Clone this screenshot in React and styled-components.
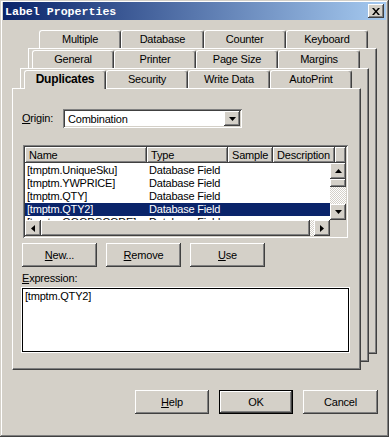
import React from "react";
import styled, { createGlobalStyle, css } from "styled-components";

const GlobalStyle = createGlobalStyle`
  html, body {
    margin: 0;
    padding: 0;
    background: #d4d0c8;
  }
  body {
    font-family: "Liberation Sans", Arial, sans-serif;
    font-size: 11px;
    color: #000;
  }
  * { box-sizing: border-box; }
`;

const raised = css`
  background: #d4d0c8;
  box-shadow: inset -1px -1px #404040, inset 1px 1px #fff,
    inset -2px -2px #808080, inset 2px 2px #d4d0c8;
`;

const sunken = css`
  box-shadow: inset 1px 1px #808080, inset -1px -1px #fff,
    inset 2px 2px #404040, inset -2px -2px #d4d0c8;
`;

const Window = styled.div`
  width: 389px;
  height: 437px;
  padding: 2px 3px 3px 3px;
  background: #d4d0c8;
  box-shadow: inset -1px -1px #404040, inset 1px 1px #d4d0c8,
    inset -2px -2px #808080, inset 2px 2px #fff;
  display: flex;
  flex-direction: column;
  letter-spacing: -0.2px;
`;

const TitleBar = styled.div`
  height: 18px;
  display: flex;
  align-items: center;
  justify-content: space-between;
  padding: 0 2px 0 2px;
  background: linear-gradient(to right, #0a246a, #a6caf0);
`;

const Title = styled.span`
  font-family: "Liberation Mono", "Courier New", monospace;
  font-weight: 700;
  font-size: 11.6px;
  letter-spacing: 0;
  color: #fff;
`;

const CloseButton = styled.div`
  ${raised};
  width: 16px;
  height: 14px;
  display: flex;
  align-items: center;
  justify-content: center;
`;

const Stack = styled.div`
  width: 349px;
  display: flex;
  flex-direction: column;
  ${({ $root }) =>
    $root
      ? css`margin: 10px 0 0 25px;`
      : css`margin: 1px 0 -9px -9px;`}
`;

const TabRow = styled.div`
  display: flex;
  height: 18px;
  padding: 0 9px 0 ${({ $indent }) => $indent}px;
`;

const Tab = styled.div`
  flex: 1;
  height: 18px;
  background: #d4d0c8;
  border-top: 1px solid #fff;
  border-left: 1px solid #fff;
  border-right: 1px solid #404040;
  border-radius: 3px 3px 0 0;
  box-shadow: inset -1px 0 #808080;
  display: flex;
  align-items: center;
  justify-content: center;
  padding-bottom: 1px;
  ${({ $active }) =>
    $active &&
    css`
      position: relative;
      height: 19px;
      margin-bottom: -1px;
      padding-bottom: 2px;
      font-weight: 700;
      font-size: 12px;
    `}
`;

const Page = styled.div`
  background: #d4d0c8;
  border-top: 1px solid #fff;
  border-left: 1px solid #fff;
  border-right: 1px solid #404040;
  border-bottom: 1px solid #404040;
  box-shadow: inset -1px -1px #808080;
  ${({ $front }) =>
    $front &&
    css`
      height: 282px;
      padding: 20px 11px 0 9px;
      display: flex;
      flex-direction: column;
    `}
`;

const FieldRow = styled.div`
  display: flex;
  align-items: center;
`;

const Label = styled.span`
  width: 41px;
  line-height: 13px;
`;

const U = styled.span`
  text-decoration: underline;
`;

const Combo = styled.div`
  ${sunken};
  background: #fff;
  width: 179px;
  height: 19px;
  padding: 2px;
  display: flex;
  align-items: center;
`;

const ComboText = styled.span`
  flex: 1;
  padding-left: 3px;
`;

const SmallButton = styled.div`
  ${raised};
  width: ${({ $w }) => $w || 16}px;
  height: ${({ $h }) => $h || 16}px;
  flex: none;
  display: flex;
  align-items: center;
  justify-content: center;
`;

const ListView = styled.div`
  ${sunken};
  background: #fff;
  width: 325px;
  height: 93px;
  margin: 17px 0 0 1px;
  padding: 2px;
  display: flex;
  flex-direction: column;
`;

const HeaderRow = styled.div`
  display: flex;
  height: 16px;
  flex: none;
`;

const HeaderCell = styled.div`
  ${raised};
  width: ${({ $w }) => $w}px;
  flex: ${({ $w }) => ($w ? "none" : 1)};
  padding-left: 4px;
  line-height: 16px;
  white-space: nowrap;
  overflow: hidden;
`;

const ListMiddle = styled.div`
  flex: 1;
  display: flex;
  min-height: 0;
`;

const Rows = styled.div`
  flex: 1;
  overflow: hidden;
  padding-top: 1px;
`;

const Row = styled.div`
  display: flex;
  height: 13px;
  line-height: 13px;
  white-space: nowrap;
  ${({ $selected }) =>
    $selected &&
    css`
      background: #0a246a;
      color: #fff;
    `}
`;

const Cell = styled.span`
  width: ${({ $w }) => $w}px;
  padding-left: 2px;
  flex: none;
`;

const checker = css`
  background-color: #fff;
  background-image: conic-gradient(
    #d4d0c8 25%,
    #fff 0 50%,
    #d4d0c8 0 75%,
    #fff 0
  );
  background-size: 2px 2px;
`;

const VScroll = styled.div`
  width: 16px;
  display: flex;
  flex-direction: column;
`;

const Track = styled.div`
  flex: 1;
  ${checker};
`;

const HScrollRow = styled.div`
  display: flex;
  height: 16px;
  flex: none;
`;

const HScroll = styled.div`
  flex: 1;
  display: flex;
`;

const Corner = styled.div`
  width: 16px;
  background: #d4d0c8;
`;

const ButtonRow = styled.div`
  display: flex;
  gap: ${({ $gap }) => $gap}px;
  margin-top: ${({ $top }) => $top}px;
  ${({ $right }) =>
    $right &&
    css`
      justify-content: flex-end;
      padding-right: 8px;
    `}
`;

const Button = styled.div`
  ${raised};
  width: ${({ $w }) => $w || 75}px;
  height: 24px;
  display: flex;
  align-items: center;
  justify-content: center;
  ${({ $default }) =>
    $default &&
    css`
      box-shadow: inset 0 0 0 1px #000, inset -2px -2px #404040,
        inset 2px 2px #fff, inset -3px -3px #808080;
    `}
`;

const ExprLabel = styled.div`
  margin-top: 5px;
  line-height: 13px;
`;

const ExprBox = styled.div`
  margin-top: 3px;
  width: 327px;
  height: 64px;
  background: #fff;
  border: 1px solid #000;
  box-shadow: 0 0 0 1px #fff;
  padding: 1px 2px;
  line-height: 13px;
`;

const Arrow = ({ dir }) => {
  const pts = {
    up: "0,4 3.5,0 7,4",
    down: "0,0 7,0 3.5,4",
    left: "4,0 4,7 0,3.5",
    right: "0,0 0,7 4,3.5",
  }[dir];
  const horiz = dir === "left" || dir === "right";
  return (
    <svg width={horiz ? 4 : 7} height={horiz ? 7 : 4} viewBox={horiz ? "0 0 4 7" : "0 0 7 4"}>
      <polygon points={pts} fill="#000" />
    </svg>
  );
};

const rows = [
  ["[tmptm.UniqueSku]", "Database Field"],
  ["[tmptm.YWPRICE]", "Database Field"],
  ["[tmptm.QTY]", "Database Field"],
  ["[tmptm.QTY2]", "Database Field", true],
  ["[tmptm.GOODSCODE]", "Database Field"],
];

const tabRows = [
  ["Multiple", "Database", "Counter", "Keyboard"],
  ["General", "Printer", "Page Size", "Margins"],
  ["Duplicates", "Security", "Write Data", "AutoPrint"],
];

const TabStrip = ({ labels, indent, active }) => (
  <TabRow $indent={indent}>
    {labels.map((t) => (
      <Tab key={t} $active={t === active}>
        {t}
      </Tab>
    ))}
  </TabRow>
);

const FrontPage = () => (
  <Page $front>
    <FieldRow>
      <Label>
        <U>O</U>rigin:
      </Label>
      <Combo>
        <ComboText>Combination</ComboText>
        <SmallButton $h={15}>
          <Arrow dir="down" />
        </SmallButton>
      </Combo>
    </FieldRow>

    <ListView>
      <HeaderRow>
        <HeaderCell $w={122}>Name</HeaderCell>
        <HeaderCell $w={81}>Type</HeaderCell>
        <HeaderCell $w={45}>Sample</HeaderCell>
        <HeaderCell $w={62}>Description</HeaderCell>
        <HeaderCell />
      </HeaderRow>
      <ListMiddle>
        <Rows>
          {rows.map(([name, type, sel]) => (
            <Row key={name} $selected={sel}>
              <Cell $w={122}>{name}</Cell>
              <Cell $w={81}>{type}</Cell>
            </Row>
          ))}
        </Rows>
        <VScroll>
          <SmallButton>
            <Arrow dir="up" />
          </SmallButton>
          <SmallButton $h={8} />
          <Track />
          <SmallButton>
            <Arrow dir="down" />
          </SmallButton>
        </VScroll>
      </ListMiddle>
      <HScrollRow>
        <HScroll>
          <SmallButton>
            <Arrow dir="left" />
          </SmallButton>
          <SmallButton $w={269} />
          <Track />
          <SmallButton>
            <Arrow dir="right" />
          </SmallButton>
        </HScroll>
        <Corner />
      </HScrollRow>
    </ListView>

    <ButtonRow $gap={9} $top={5}>
      <Button>
        <span>
          <U>N</U>ew...
        </span>
      </Button>
      <Button>
        <span>
          <U>R</U>emove
        </span>
      </Button>
      <Button>
        <span>
          <U>U</U>se
        </span>
      </Button>
    </ButtonRow>

    <ExprLabel>
      <U>E</U>xpression:
    </ExprLabel>
    <ExprBox>[tmptm.QTY2]</ExprBox>
  </Page>
);

export default function App() {
  return (
    <>
      <GlobalStyle />
      <Window>
        <TitleBar>
          <Title>Label Properties</Title>
          <CloseButton>
            <svg width="8" height="7" viewBox="0 0 8 7">
              <path d="M0 0h2l2 2.5L6 0h2L5 3.5 8 7H6L4 4.5 2 7H0l3-3.5z" fill="#000" />
            </svg>
          </CloseButton>
        </TitleBar>

        <Stack $root>
          <TabStrip labels={tabRows[0]} indent={11} />
          <Page>
            <Stack>
              <TabStrip labels={tabRows[1]} indent={12} />
              <Page>
                <Stack>
                  <TabStrip labels={tabRows[2]} indent={12} active="Duplicates" />
                  <FrontPage />
                </Stack>
              </Page>
            </Stack>
          </Page>
        </Stack>

        <ButtonRow $right $gap={10} $top={36}>
          <Button $w={74}>
            <span>
              <U>H</U>elp
            </span>
          </Button>
          <Button $w={74} $default>
            OK
          </Button>
          <Button $w={75}>Cancel</Button>
        </ButtonRow>
      </Window>
    </>
  );
}
